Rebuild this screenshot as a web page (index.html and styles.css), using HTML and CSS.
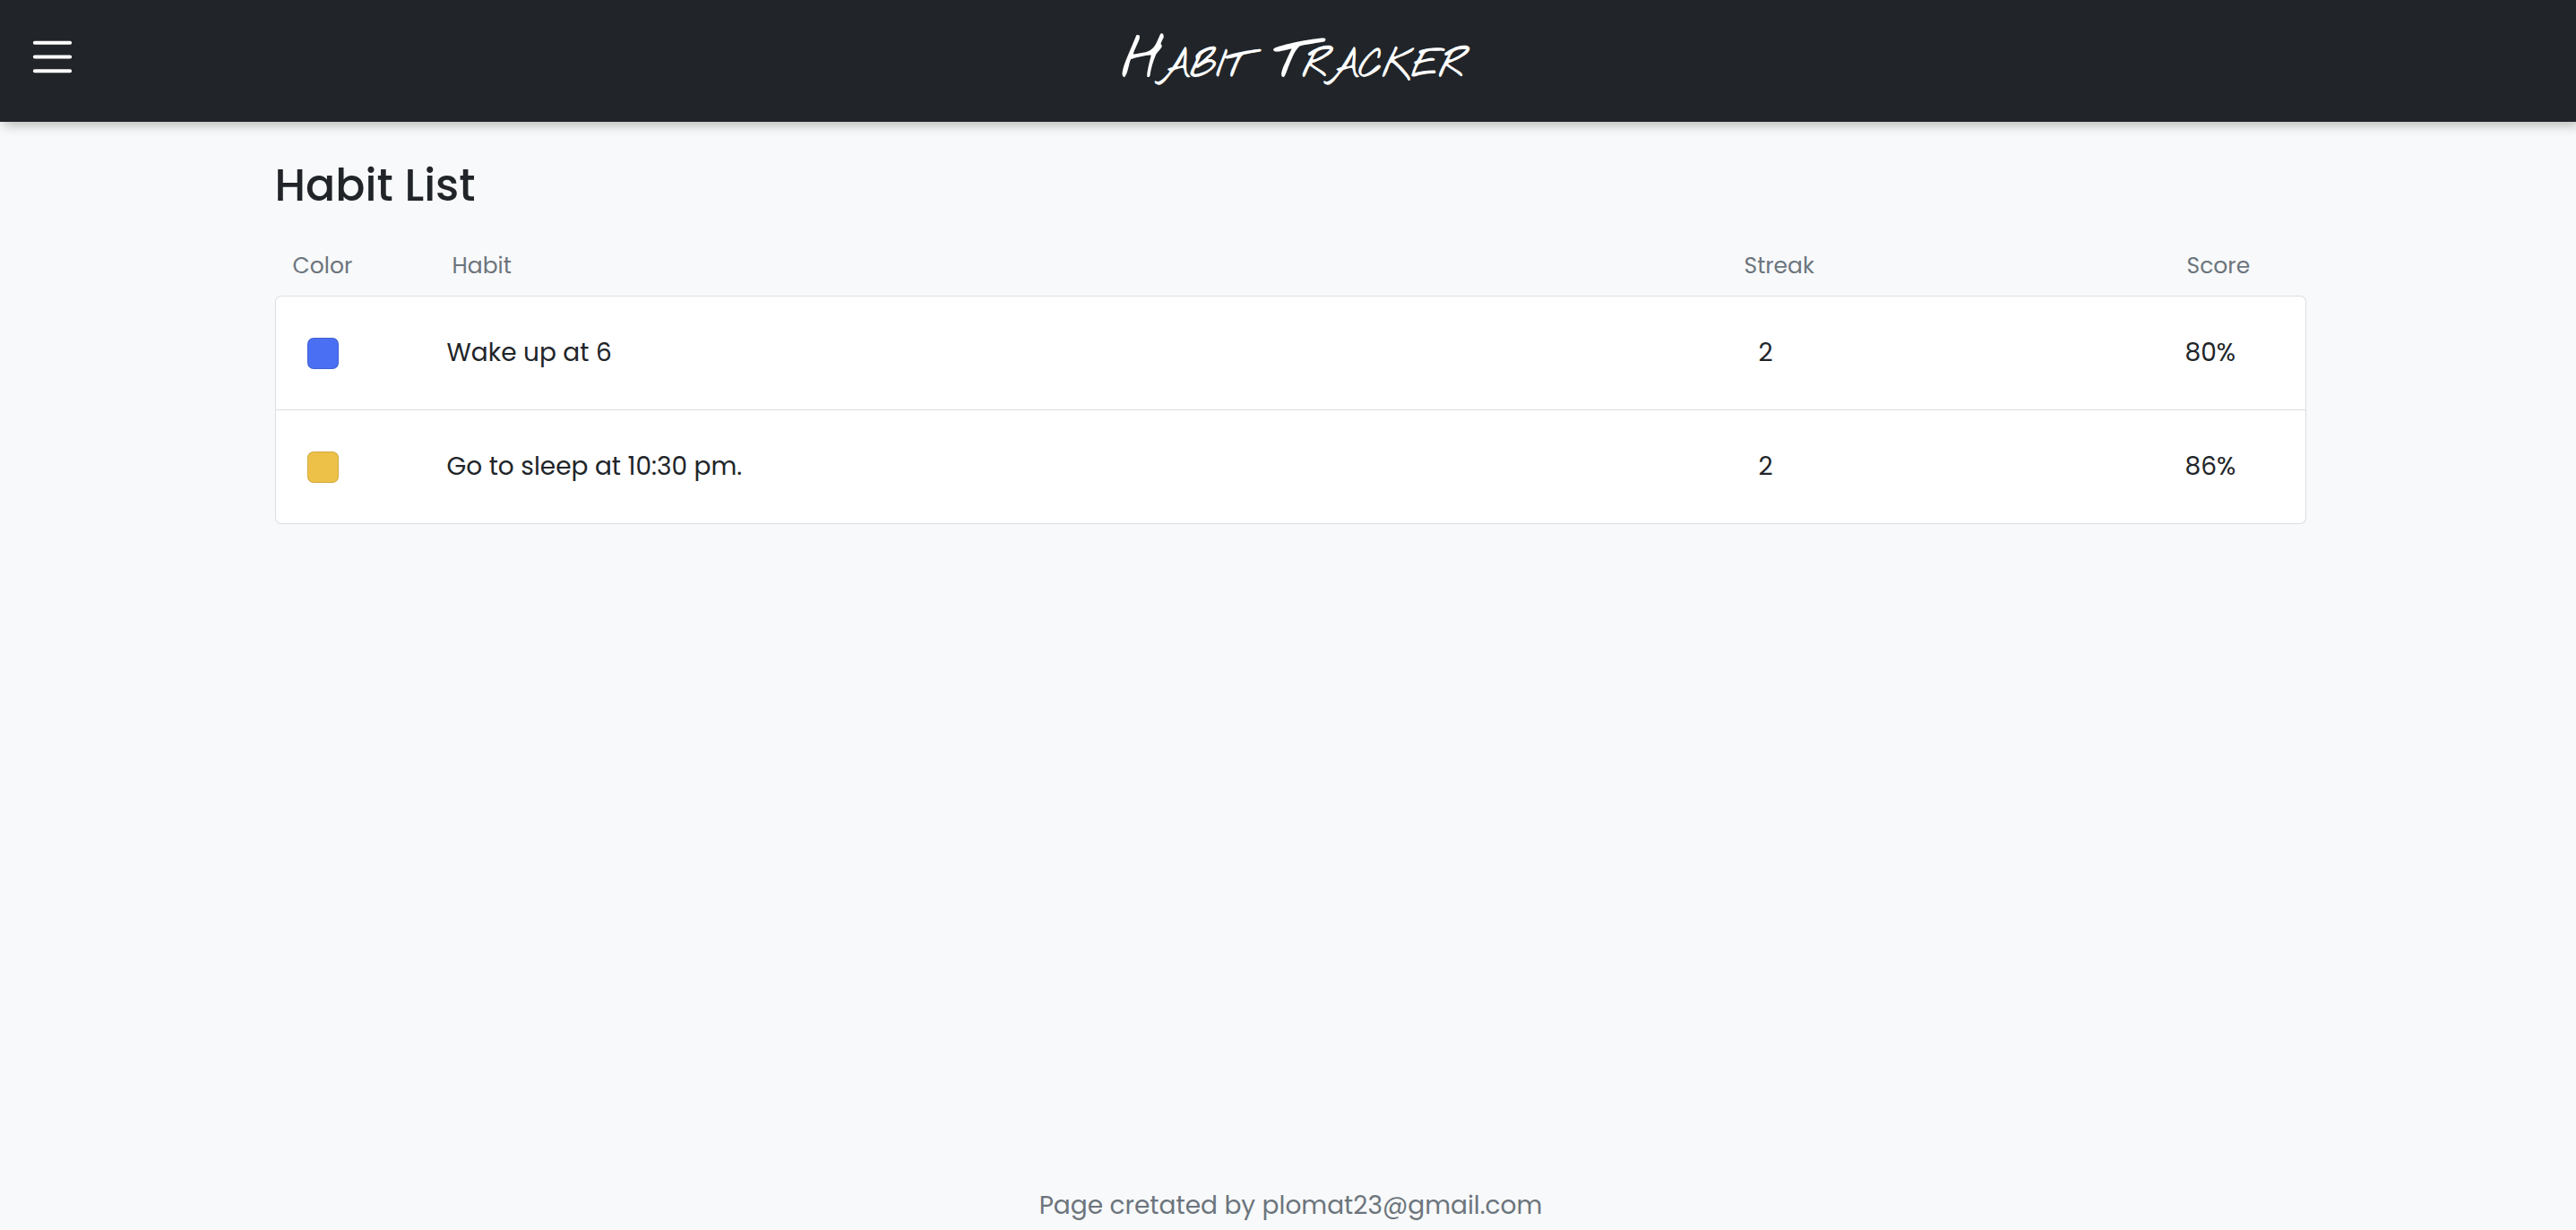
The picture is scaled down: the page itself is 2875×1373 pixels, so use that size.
FILE: index.html
```html
<!DOCTYPE html>
<html lang="en">
<head>
  <meta charset="utf-8">
  <meta name="viewport" content="width=device-width, initial-scale=1">
  <title>Habit Tracker</title>
  <link rel="stylesheet" href="styles.css">
</head>
<body>
  <header class="navbar">
    <button class="menu-button" type="button" aria-label="Open menu">
      <svg viewBox="0 0 16 16" fill="currentColor" aria-hidden="true">
        <path d="M2.5 12a.5.5 0 0 1 .5-.5h10a.5.5 0 0 1 0 1H3a.5.5 0 0 1-.5-.5zm0-4a.5.5 0 0 1 .5-.5h10a.5.5 0 0 1 0 1H3a.5.5 0 0 1-.5-.5zm0-4a.5.5 0 0 1 .5-.5h10a.5.5 0 0 1 0 1H3a.5.5 0 0 1-.5-.5z"/>
      </svg>
    </button>
    <a class="brand" href="#">Habit Tracker</a>
  </header>

  <main class="container">
    <h1 class="title">Habit List</h1>
    <table class="habits">
      <thead>
        <tr>
          <th class="col-color" scope="col">Color</th>
          <th class="col-habit" scope="col">Habit</th>
          <th class="col-streak" scope="col">Streak</th>
          <th class="col-score" scope="col">Score</th>
        </tr>
      </thead>
      <tbody>
        <tr>
          <td class="col-color"><span class="swatch swatch-blue"></span></td>
          <td class="col-habit">Wake up at 6</td>
          <td class="col-streak">2</td>
          <td class="col-score">80%</td>
        </tr>
        <tr>
          <td class="col-color"><span class="swatch swatch-yellow"></span></td>
          <td class="col-habit">Go to sleep at 10:30 pm.</td>
          <td class="col-streak">2</td>
          <td class="col-score">86%</td>
        </tr>
      </tbody>
    </table>
  </main>

  <footer class="footer">Page cretated by plomat23@gmail.com</footer>
</body>
</html>
```

FILE: styles.css
```css
* {
  box-sizing: border-box;
}

body {
  display: flex;
  flex-direction: column;
  min-height: 100vh;
  margin: 0;
  background: #f8f9fa;
  color: #212529;
  font-family: Poppins, Inter, sans-serif;
  font-size: 28px;
  line-height: 42px;
}

.navbar {
  display: grid;
  grid-template-columns: 1fr auto 1fr;
  align-items: center;
  height: 136px;
  padding: 0 16px 10px 27px;
  background: #212529;
  box-shadow: 4px 4px 12px rgba(0, 0, 0, 0.25);
  color: #fff;
}

.menu-button {
  width: 63px;
  height: 63px;
  padding: 0;
  border: 0;
  background: none;
  color: inherit;
  cursor: pointer;
}

.menu-button svg {
  display: block;
  width: 100%;
  height: 100%;
}

.brand {
  padding-top: 12px;
  color: inherit;
  font-family: "Nothing You Could Do", Lato, cursive;
  font-size: 60px;
  font-variant: small-caps;
  font-weight: 700;
  line-height: 72px;
  text-decoration: none;
}

.container {
  flex: 1;
  width: 100%;
  max-width: 2310px;
  margin: 0 auto;
  padding: 42px 19px 0 24px;
}

.title {
  margin: 0 0 28px;
  font-size: 49px;
  font-weight: 500;
  line-height: 58px;
}

.habits {
  width: 100%;
  border-collapse: separate;
  border-spacing: 0;
  table-layout: fixed;
}

.habits th {
  height: 66px;
  padding: 0 20px;
  color: #6c757d;
  font-size: 25px;
  font-weight: 400;
  text-align: left;
}

.habits td {
  height: 127px;
  padding: 0 14px;
  border-bottom: 1px solid #dcdee0;
  background: #fff;
}

.habits tbody tr:first-child td {
  height: 128px;
  border-top: 1px solid #dcdee0;
}

.habits td:first-child {
  border-left: 1px solid #dcdee0;
}

.habits td:last-child {
  border-right: 1px solid #dcdee0;
}

.habits tr:first-child td:first-child {
  border-top-left-radius: 7px;
}

.habits tr:first-child td:last-child {
  border-top-right-radius: 7px;
}

.habits tr:last-child td:first-child {
  border-bottom-left-radius: 7px;
}

.habits tr:last-child td:last-child {
  border-bottom-right-radius: 7px;
}

.habits .col-color {
  width: 178px;
}

.habits .col-streak {
  width: 494px;
}

.habits .col-score {
  width: 153px;
}

.habits td.col-color {
  padding-left: 35px;
}

.habits td.col-streak {
  padding-left: 36px;
}

.habits td.col-score {
  padding-left: 18px;
}

.swatch {
  display: block;
  width: 35px;
  height: 35px;
  border: 1px solid rgba(0, 0, 0, 0.12);
  border-radius: 7px;
}

.swatch-blue {
  background: #4a6ff3;
}

.swatch-yellow {
  background: #edc148;
}

.footer {
  padding: 0 0 6px 6px;
  color: #6c757d;
  text-align: center;
}
```
